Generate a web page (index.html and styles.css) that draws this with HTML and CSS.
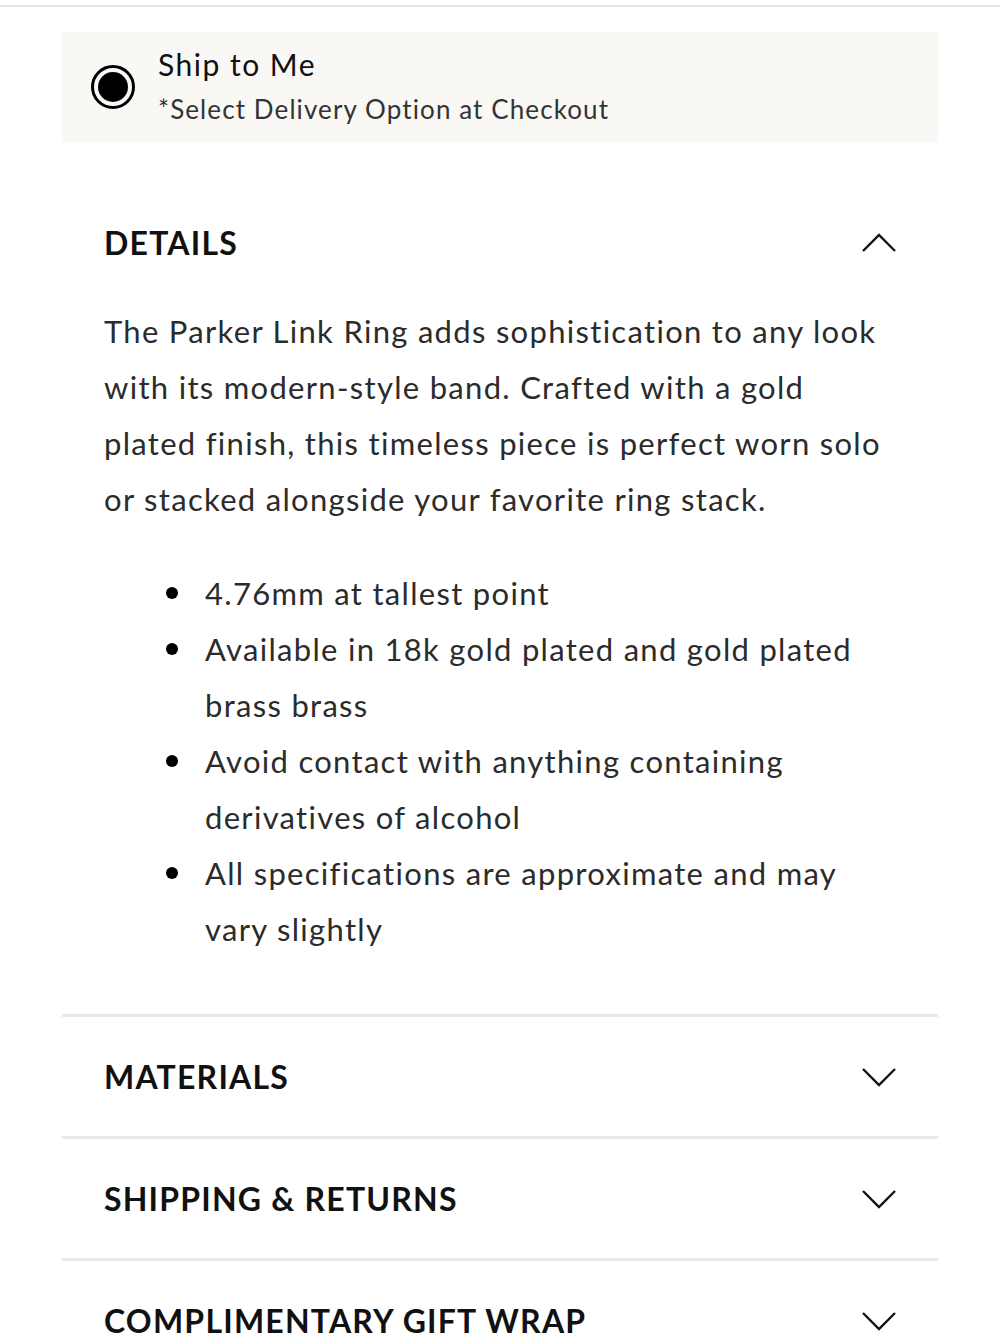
FILE: index.html
```html
<!DOCTYPE html>
<html lang="en">
<head>
    <meta charset="UTF-8">
    <meta name="viewport" content="width=device-width, initial-scale=1.0">
    <title>Parker Link Ring</title>
    <link rel="stylesheet" href="styles.css">
</head>
<body>
    <div class="top-rule"></div>

    <div class="page">
        <!-- Opcion de envio -->
        <div class="ship-box">
            <span class="radio"><span class="radio-dot"></span></span>
            <div class="ship-text">
                <div class="ship-title">Ship to Me</div>
                <div class="ship-note">*Select Delivery Option at Checkout</div>
            </div>
        </div>

        <!-- Detalles (abierto) -->
        <div class="section open">
            <div class="section-head">
                <span class="section-title">DETAILS</span>
                <svg class="chevron" width="36" height="20" viewBox="0 0 36 20"><polyline points="2,18 18,2 34,18" fill="none" stroke="#111" stroke-width="2.4"/></svg>
            </div>
            <div class="section-body">
                <p class="desc">The Parker Link Ring adds sophistication to any look with its modern-style band. Crafted with a gold plated finish, this timeless piece is perfect worn solo or stacked alongside your favorite ring stack.</p>
                <ul class="specs">
                    <li>4.76mm at tallest point</li>
                    <li>Available in 18k gold plated and gold plated brass brass</li>
                    <li>Avoid contact with anything containing derivatives of alcohol</li>
                    <li>All specifications are approximate and may vary slightly</li>
                </ul>
            </div>
        </div>

        <div class="section">
            <div class="section-head">
                <span class="section-title">MATERIALS</span>
                <svg class="chevron" width="36" height="20" viewBox="0 0 36 20"><polyline points="2,2 18,18 34,2" fill="none" stroke="#111" stroke-width="2.4"/></svg>
            </div>
        </div>

        <div class="section">
            <div class="section-head">
                <span class="section-title">SHIPPING &amp; RETURNS</span>
                <svg class="chevron" width="36" height="20" viewBox="0 0 36 20"><polyline points="2,2 18,18 34,2" fill="none" stroke="#111" stroke-width="2.4"/></svg>
            </div>
        </div>

        <div class="section">
            <div class="section-head">
                <span class="section-title">COMPLIMENTARY GIFT WRAP</span>
                <svg class="chevron" width="36" height="20" viewBox="0 0 36 20"><polyline points="2,2 18,18 34,2" fill="none" stroke="#111" stroke-width="2.4"/></svg>
            </div>
        </div>
    </div>
</body>
</html>
```

FILE: styles.css
```css
/* Base */
body {
    margin: 0;
    background: #fff;
    color: #2b2b2b;
    font-family: "Lato", "Liberation Sans", sans-serif;
}

.top-rule {
    height: 2px;
    margin-top: 5px;
    background: #e6e6ea;
}

.page {
    padding: 0 62px;
}

/* Caja de envio */
.ship-box {
    margin-top: 25px;
    height: 110px;
    background: #f9f8f5;
    display: flex;
    align-items: center;
    padding-left: 29px;
}

.radio {
    width: 38px;
    height: 38px;
    border: 3px solid #000;
    border-radius: 50%;
    display: flex;
    align-items: center;
    justify-content: center;
    flex-shrink: 0;
}

.radio-dot {
    width: 30px;
    height: 30px;
    border-radius: 50%;
    background: #000;
}

.ship-text {
    margin-left: 23px;
    margin-top: 4px;
}

.ship-title {
    font-size: 30px;
    line-height: 40px;
    letter-spacing: 1.5px;
    color: #111;
}

.ship-note {
    font-size: 26px;
    line-height: 50px;
    letter-spacing: 1.1px;
    color: #333;
}

/* Secciones */
.section {
    border-bottom: 3px solid #e8e8ec;
}

.section.open {
    margin-top: 40px;
    padding-bottom: 57px;
}

.section-head {
    height: 119px;
    padding: 0 41px 0 42px;
    display: flex;
    align-items: center;
    justify-content: space-between;
}

.section.open .section-head {
    height: 121px;
}

.section-title {
    font-size: 32px;
    font-weight: 700;
    letter-spacing: 1.2px;
    color: #111;
}

.section-body {
    padding: 0 42px;
}

.desc {
    margin: 0;
    font-size: 31px;
    line-height: 56px;
    letter-spacing: 1.3px;
}

.specs {
    list-style: none;
    margin: 38px 0 0;
    padding: 0 0 0 62px;
    font-size: 31px;
    line-height: 56px;
    letter-spacing: 1.3px;
}

.specs li {
    display: flex;
}

.specs li::before {
    content: "";
    flex-shrink: 0;
    width: 12px;
    height: 12px;
    margin: 22px 27px 0 0;
    border-radius: 50%;
    background: #000;
}
```
